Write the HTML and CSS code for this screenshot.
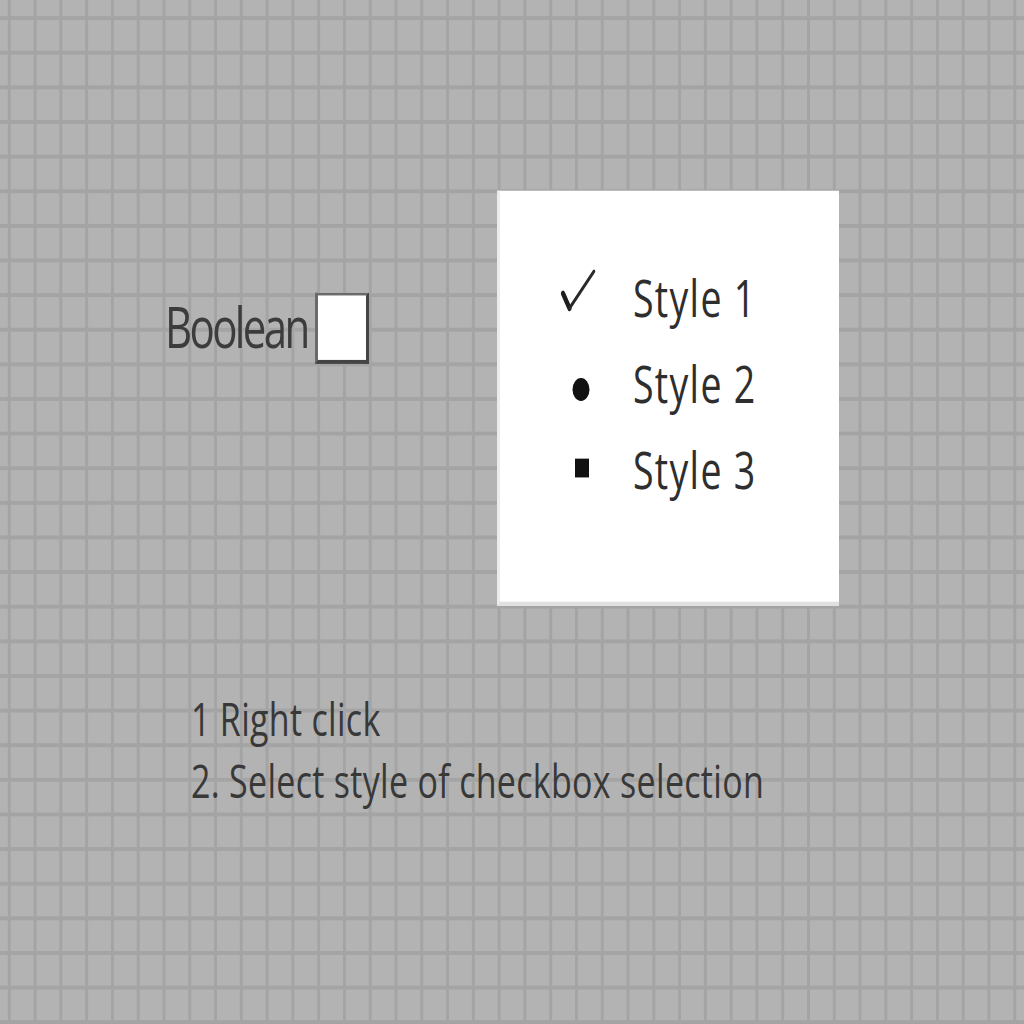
FILE: index.html
```html
<!DOCTYPE html>
<html lang="en">
<head>
<meta charset="utf-8">
<title>Boolean checkbox styles</title>
<link rel="stylesheet" href="styles.css">
</head>
<body>
<div class="stage">
  <div class="top">
    <div class="left">
      <div class="bool">
        <span class="bool-label">Boolean</span>
        <span class="checkbox"></span>
      </div>
    </div>
    <div class="menu">
      <div class="item">
        <svg class="mark" viewBox="0 0 136 64" width="136" height="64">
          <path d="M66 28.5 L72.5 39.5" stroke="#1e1e1e" stroke-width="4.2" stroke-linecap="round" fill="none"/>
          <path d="M72.5 39.5 L97 12" stroke="#2a2a2a" stroke-width="2.6" stroke-linecap="round" fill="none"/>
        </svg>
        <span class="label">Style 1</span>
      </div>
      <div class="item">
        <svg class="mark" viewBox="0 0 136 64" width="136" height="64">
          <circle cx="84" cy="36" r="8.5" fill="#111"/>
        </svg>
        <span class="label">Style 2</span>
      </div>
      <div class="item">
        <svg class="mark" viewBox="0 0 136 64" width="136" height="64">
          <rect x="78" y="23.5" width="14" height="14" fill="#111"/>
        </svg>
        <span class="label">Style 3</span>
      </div>
    </div>
  </div>
  <div class="notes">
    <p>1 Right click</p>
    <p>2. Select style of checkbox selection</p>
  </div>
</div>
</body>
</html>
```

FILE: styles.css
```css
html, body {
  margin: 0;
  padding: 0;
  width: 1024px;
  height: 1024px;
  background: #b3b3b3;
}

html {
  overflow: hidden;
}

.stage {
  width: 1024px;
  height: 763px;
  transform: scaleY(1.343);
  transform-origin: 0 0;
  font-family: "Open Sans", "Noto Sans", sans-serif;
  background-color: #b3b3b3;
  background-image:
    linear-gradient(to right, #a4a4a4 0 3px, transparent 3px),
    linear-gradient(to bottom, #a4a4a4 0 3px, transparent 3px);
  background-size: 25.79px 100%, 100% 25.79px;
  background-position: 7.8px 0, 0 12px;
  display: flex;
  flex-direction: column;
  padding-top: 141.5px;
  box-sizing: border-box;
}

.top {
  display: flex;
  align-items: flex-start;
}

.left {
  width: 497px;
  box-sizing: border-box;
  padding-left: 165px;
  padding-top: 76px;
}

.bool {
  display: flex;
  align-items: center;
}

.bool-label {
  font-size: 42px;
  line-height: 42px;
  letter-spacing: -2.6px;
  color: #3c3c3c;
  margin-right: 7px;
  position: relative;
  top: -1px;
}

.checkbox {
  display: block;
  width: 54px;
  height: 53px;
  box-sizing: border-box;
  background: #fff;
  border-left: 3px solid #6a6a6a;
  border-top: 2.5px solid #6a6a6a;
  border-right: 3px solid #444;
  border-bottom: 3px solid #444;
}

.menu {
  width: 342px;
  height: 309px;
  box-sizing: border-box;
  background: #fff;
  border-left: 3px solid #ececec;
  border-bottom: 3px solid #e0e0e0;
  padding-top: 48px;
}

.item {
  display: flex;
  align-items: flex-start;
  height: 64px;
}

.mark {
  display: block;
  flex: none;
  margin-left: -3px;
}

.label {
  font-size: 37.5px;
  line-height: 64px;
  color: #2e2e2e;
  letter-spacing: 1.3px;
}

.notes {
  margin-top: 61px;
  padding-left: 191px;
  color: #383838;
  font-size: 34px;
  line-height: 46px;
  letter-spacing: 0.3px;
}

.notes p {
  margin: 0;
}
```
